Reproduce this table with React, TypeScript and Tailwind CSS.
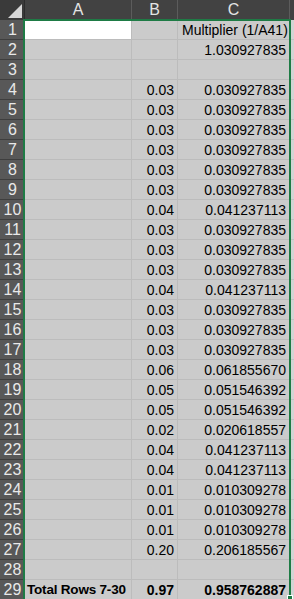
import React from "react";

type Row = { a?: string; b?: string; c?: string; bold?: boolean; white?: boolean; cText?: boolean };

const rows: Row[] = [
  { white: true, c: "Multiplier (1/A41)", cText: true },
  { c: "1.030927835" },
  {},
  { b: "0.03", c: "0.030927835" },
  { b: "0.03", c: "0.030927835" },
  { b: "0.03", c: "0.030927835" },
  { b: "0.03", c: "0.030927835" },
  { b: "0.03", c: "0.030927835" },
  { b: "0.03", c: "0.030927835" },
  { b: "0.04", c: "0.041237113" },
  { b: "0.03", c: "0.030927835" },
  { b: "0.03", c: "0.030927835" },
  { b: "0.03", c: "0.030927835" },
  { b: "0.04", c: "0.041237113" },
  { b: "0.03", c: "0.030927835" },
  { b: "0.03", c: "0.030927835" },
  { b: "0.03", c: "0.030927835" },
  { b: "0.06", c: "0.061855670" },
  { b: "0.05", c: "0.051546392" },
  { b: "0.05", c: "0.051546392" },
  { b: "0.02", c: "0.020618557" },
  { b: "0.04", c: "0.041237113" },
  { b: "0.04", c: "0.041237113" },
  { b: "0.01", c: "0.010309278" },
  { b: "0.01", c: "0.010309278" },
  { b: "0.01", c: "0.010309278" },
  { b: "0.20", c: "0.206185567" },
  {},
  { a: "Total Rows 7-30", b: "0.97", c: "0.958762887", bold: true },
];

const Sheet: React.FC = () => {
  return (
    <div
      className="relative w-[294px] h-[599px] overflow-hidden bg-[#cbcbcb] text-black"
      style={{ fontFamily: '"Liberation Sans", Arial, sans-serif' }}
    >
      {/* column headers */}
      <div className="flex h-[20px] bg-[#3a3a3a] text-[#e4e4e4] text-[16px]">
        <div className="w-[25px] relative border-r border-[#2c2c2c]">
          <svg width="25" height="20" className="absolute left-0 top-0">
            <polygon points="8,18 22,18 22,4" fill="#d6d6d6" />
          </svg>
        </div>
        <div className="w-[107px] flex items-center justify-center bg-[#424242] border-r border-[#5c5c5c]">A</div>
        <div className="w-[46px] flex items-center justify-center bg-[#424242] border-r border-[#5c5c5c]">B</div>
        <div className="w-[112px] flex items-center justify-center bg-[#424242] border-r border-[#5c5c5c]">C</div>
        <div className="flex-1 bg-[#424242]" />
      </div>

      {rows.map((r, i) => (
        <div key={i} className="flex h-[20px] text-[14px] leading-none">
          <div className="w-[25px] flex items-center justify-center bg-[#585858] text-[#e8e8e8] text-[16px] border-b border-[#3e3e3e]">
            {i + 1}
          </div>
          <div
            className={`w-[107px] flex items-center px-[2px] border-r border-b border-[#bcbcbc] whitespace-nowrap ${
              r.white ? "bg-white" : ""
            } ${r.bold ? "font-bold text-[13.5px] tracking-[-0.2px]" : ""}`}
          >
            {r.a}
          </div>
          <div
            className={`w-[46px] flex items-center justify-end pr-[3px] border-r border-b border-[#bcbcbc] ${
              r.bold ? "font-bold" : ""
            }`}
          >
            {r.b}
          </div>
          <div
            className={`w-[112px] flex items-center pr-[3px] border-r border-b border-[#bcbcbc] whitespace-nowrap ${
              r.cText ? "justify-start pl-[4px]" : "justify-end"
            } ${r.bold ? "font-bold" : ""}`}
          >
            {r.c}
          </div>
          <div className="flex-1 bg-[#d4d4d4] border-b border-[#c4c4c4]" />
        </div>
      ))}

      {/* selection border */}
      <div className="absolute left-[23px] top-[19px] w-[268px] h-[600px] border-2 border-[#1e7b45] pointer-events-none" />
      <div className="absolute left-[287px] top-[595px] w-[6px] h-[6px] bg-[#1e7b45] border border-white" />
    </div>
  );
};

export default function App() {
  return <Sheet />;
}
